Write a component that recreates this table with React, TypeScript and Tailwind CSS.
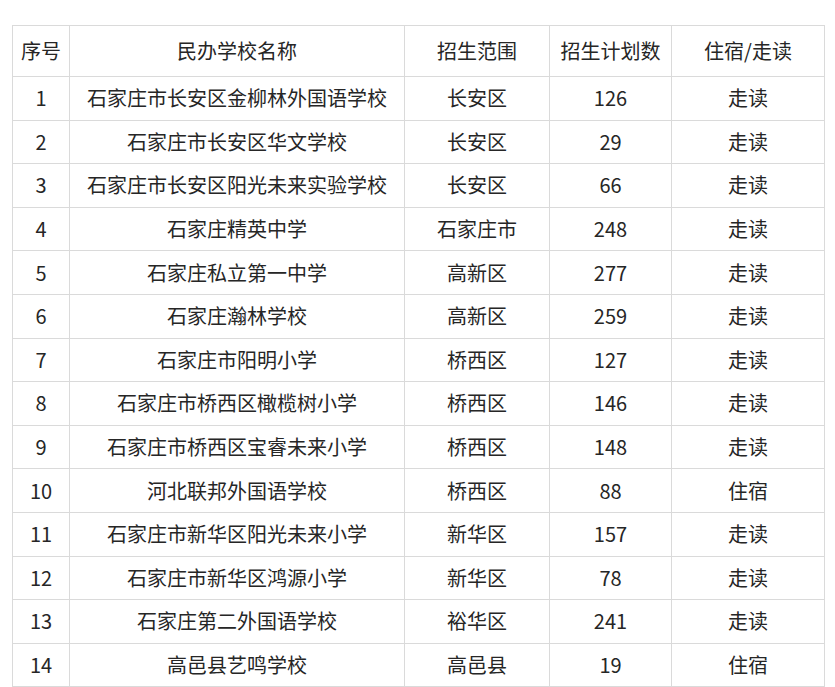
const rows: [string, string, string, string, string][] = [
  ["1", "石家庄市长安区金柳林外国语学校", "长安区", "126", "走读"],
  ["2", "石家庄市长安区华文学校", "长安区", "29", "走读"],
  ["3", "石家庄市长安区阳光未来实验学校", "长安区", "66", "走读"],
  ["4", "石家庄精英中学", "石家庄市", "248", "走读"],
  ["5", "石家庄私立第一中学", "高新区", "277", "走读"],
  ["6", "石家庄瀚林学校", "高新区", "259", "走读"],
  ["7", "石家庄市阳明小学", "桥西区", "127", "走读"],
  ["8", "石家庄市桥西区橄榄树小学", "桥西区", "146", "走读"],
  ["9", "石家庄市桥西区宝睿未来小学", "桥西区", "148", "走读"],
  ["10", "河北联邦外国语学校", "桥西区", "88", "住宿"],
  ["11", "石家庄市新华区阳光未来小学", "新华区", "157", "走读"],
  ["12", "石家庄市新华区鸿源小学", "新华区", "78", "走读"],
  ["13", "石家庄第二外国语学校", "裕华区", "241", "走读"],
  ["14", "高邑县艺鸣学校", "高邑县", "19", "住宿"],
];

const cell = "border border-[#dadada] text-center align-middle p-0";

export default function App() {
  return (
    <div className="w-[835px] h-[687px] overflow-hidden bg-white pt-[25px] pl-[12px] font-['Noto_Sans_CJK_SC','Noto_Sans',sans-serif] text-[20px] text-[#262626]">
      <table className="border-collapse table-fixed w-[812px]">
        <colgroup>
          <col className="w-[57px]" />
          <col className="w-[335px]" />
          <col className="w-[145px]" />
          <col className="w-[122px]" />
          <col className="w-[153px]" />
        </colgroup>
        <thead>
          <tr className="h-[51px]">
            <th className={`${cell} font-normal`}>序号</th>
            <th className={`${cell} font-normal`}>民办学校名称</th>
            <th className={`${cell} font-normal`}>招生范围</th>
            <th className={`${cell} font-normal`}>招生计划数</th>
            <th className={`${cell} font-normal`}>住宿/走读</th>
          </tr>
        </thead>
        <tbody>
          {rows.map((r) => (
            <tr key={r[0]} className="h-[43.6px]">
              {r.map((v, i) => (
                <td key={i} className={cell}>
                  {v}
                </td>
              ))}
            </tr>
          ))}
        </tbody>
      </table>
    </div>
  );
}
